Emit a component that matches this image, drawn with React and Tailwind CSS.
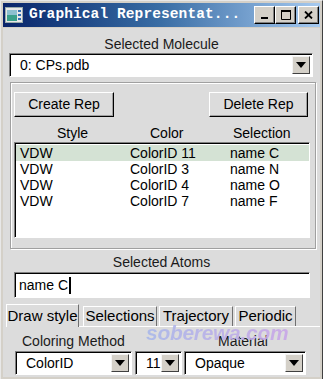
const Arrow = ({ w = 'w-[18px]' }) => (
  <div className={`${w} h-full shrink-0 bg-[#d4d0c8] border border-t-[#f4f4f4] border-l-[#f4f4f4] border-b-[#404040] border-r-[#404040] flex items-center justify-center`}>
    <svg width="10" height="6" viewBox="0 0 10 6">
      <path d="M0 0h10L5 6z" fill="#000" />
    </svg>
  </div>
);

const Combo = ({ value, className }) => (
  <div className={`${className} flex bg-white border border-t-[#808080] border-l-[#808080] border-b-white border-r-white shadow-[inset_1px_1px_0_#000] p-[2px] pl-[1px]`}>
    <div className="flex-1 pl-[9px] leading-[18px] truncate">{value}</div>
    <Arrow />
  </div>
);

const Button = ({ children, className }) => (
  <div className={`${className} h-[25px] flex items-center justify-center bg-[#dcdcdc] border border-t-white border-l-white border-b-black border-r-black shadow-[inset_-1px_-1px_0_#a0a0a0]`}>
    {children}
  </div>
);

const reps = [
  { style: 'VDW', color: 'ColorID 11', sel: 'name C' },
  { style: 'VDW', color: 'ColorID 3', sel: 'name N' },
  { style: 'VDW', color: 'ColorID 4', sel: 'name O' },
  { style: 'VDW', color: 'ColorID 7', sel: 'name F' },
];

const tabs = [
  { label: 'Selections', cls: 'ml-[4px] w-[74px]' },
  { label: 'Trajectory', cls: 'ml-[2px] w-[74px]' },
  { label: 'Periodic', cls: 'ml-[2px] w-[61px]' },
];

const TitleButton = ({ children, className = '' }) => (
  <div className={`${className} w-[21px] h-[18px] bg-[#d4d0c8] border border-t-white border-l-white border-b-black border-r-black shadow-[inset_-1px_-1px_0_#808080] flex items-center justify-center`}>
    {children}
  </div>
);

export default function App() {
  return (
    <div className="relative w-[323px] h-[379px] overflow-hidden bg-[#d4d0c8] border-t border-l border-r border-t-[#e8e8e8] border-l-[#e8e8e8] border-r-[#404040] p-[2px] flex flex-col font-['Liberation_Sans',Arial,sans-serif] text-[14px] text-black">
      {/* title bar */}
      <div className="h-[24px] shrink-0 flex items-center bg-gradient-to-r from-[#0a246a] via-[#3a6ea5] to-[#a6caf0]">
        <svg width="18" height="16" viewBox="0 0 18 16" className="ml-[2px] mr-[6px]">
          <rect x="0.5" y="0.5" width="17" height="15" fill="#e8e8e8" stroke="#9aa" />
          <rect x="2" y="3" width="10" height="11" fill="#3aa08a" />
          <rect x="2" y="3" width="10" height="5" fill="#8cc0d0" />
          <rect x="13" y="3" width="3" height="2" fill="#3070b0" />
          <rect x="13" y="7" width="3" height="2" fill="#3070b0" />
          <rect x="13" y="11" width="3" height="2" fill="#3070b0" />
        </svg>
        <span className="text-white font-bold text-[14.5px] font-['Liberation_Mono',monospace] tracking-[0.1px] whitespace-nowrap">
          Graphical Representat...
        </span>
        <div className="ml-auto flex items-center mr-[1px]">
          <TitleButton>
            <svg width="8" height="10" viewBox="0 0 8 10"><rect x="0" y="7" width="7" height="2" fill="#000" /></svg>
          </TitleButton>
          <TitleButton>
            <svg width="10" height="10" viewBox="0 0 10 10"><path d="M0.5 1.5h9v8h-9z" fill="none" stroke="#000" /><rect x="0" y="0" width="10" height="2" fill="#000" /></svg>
          </TitleButton>
          <TitleButton className="ml-[2px]">
            <svg width="9" height="8" viewBox="0 0 9 8"><path d="M1 0.5l7 7M8 0.5l-7 7" stroke="#000" strokeWidth="1.8" /></svg>
          </TitleButton>
        </div>
      </div>

      {/* body */}
      <div className="flex-1 flex flex-col bg-[#dcdcdc] mt-px">
        <div className="mt-[8px] h-[16px] leading-[16px] text-center text-[#1a1a1a]">Selected Molecule</div>
        <Combo value="0: CPs.pdb" className="mt-[1px] ml-[6px] w-[304px] h-[24px]" />

        {/* reps frame */}
        <div className="mt-[5px] ml-[7px] w-[306px] h-[167px] border border-[#a0a0a0] shadow-[inset_1px_1px_0_#fff,1px_1px_0_#fff] flex flex-col">
          <div className="mt-[9px] flex">
            <Button className="ml-[3px] w-[100px]">Create Rep</Button>
            <Button className="ml-auto mr-[7px] w-[99px]">Delete Rep</Button>
          </div>
          <div className="mt-[8px] h-[16px] leading-[16px] flex">
            <span className="ml-[46px] w-[93px]">Style</span>
            <span className="w-[83px]">Color</span>
            <span>Selection</span>
          </div>
          <div className="mt-[1px] ml-[3px] w-[296px] h-[96px] bg-white border border-t-[#808080] border-l-[#808080] border-b-white border-r-white shadow-[inset_1px_1px_0_#000] pt-[2px] pl-[1px]">
            {reps.map((r, i) => (
              <div key={i} className={`h-[16px] leading-[16px] flex pl-[4px] ${i === 0 ? 'bg-[#d4e2d4]' : ''}`}>
                <span className="w-[110px]">{r.style}</span>
                <span className="w-[100px]">{r.color}</span>
                <span>{r.sel}</span>
              </div>
            ))}
          </div>
        </div>

        <div className="mt-[5px] h-[16px] leading-[16px] text-center text-[#1a1a1a]">Selected Atoms</div>
        <div className="mt-[2px] ml-[11px] w-[296px] h-[26px] bg-white border border-t-[#808080] border-l-[#808080] border-b-white border-r-white shadow-[inset_1px_1px_0_#000] flex items-center pl-[4px]">
          <span>name C</span>
          <span className="w-[2px] h-[17px] bg-black ml-[1px]" />
        </div>

        {/* tabs */}
        <div className="mt-[6px] flex items-end h-[23px] ml-[3px] text-[15px] whitespace-nowrap">
          <div className="shrink-0 w-[73px] h-[23px] flex items-center justify-center bg-[#dcdcdc] border-l border-t border-l-white border-t-white border-r border-r-[#707070]">Draw style</div>
          <div className="flex-1 h-[20px] flex items-end border-b border-b-white">
            {tabs.map((t) => (
              <div key={t.label} className={`${t.cls} shrink-0 h-[20px] flex items-center justify-center border-l border-t border-l-white border-t-white border-r border-r-[#707070]`}>{t.label}</div>
            ))}
          </div>
        </div>

        <div className="mt-[6px] h-[16px] leading-[16px] flex text-[#1a1a1a]">
          <span className="ml-[19px] w-[196px]">Coloring Method</span>
          <span>Material</span>
        </div>
        <div className="mt-[2px] flex h-[24px]">
          <Combo value="ColorID" className="ml-[12px] w-[117px] h-[24px]" />
          <Combo value="11" className="ml-[3px] w-[47px] h-[24px]" />
          <Combo value="Opaque" className="ml-[2px] w-[122px] h-[24px]" />
        </div>
      </div>

      {/* watermark */}
      <div className="absolute left-[145px] top-[321px] leading-none text-[21px] font-bold italic tracking-[-0.3px] bg-gradient-to-r from-[#a9b8ea] to-[#c9a6e8] bg-clip-text text-transparent opacity-90 pointer-events-none">
        soberewa.com
      </div>
    </div>
  );
}
